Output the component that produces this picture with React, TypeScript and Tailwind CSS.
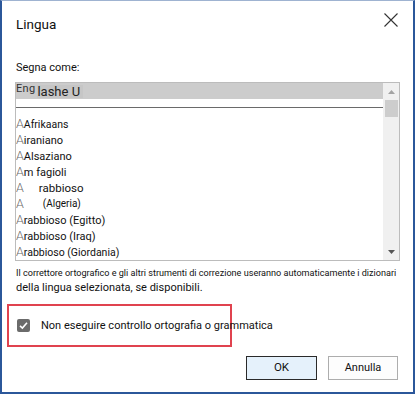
import React from "react";

const font = { fontFamily: 'Roboto, "Liberation Sans", sans-serif' };

function LightA() {
  return <span className="text-[12.5px] font-light text-[#6a6a6a]">A</span>;
}

export default function App() {
  return (
    <div
      className="w-[415px] h-[394px] bg-white border-t border-t-[#9fb3d1] border-l-2 border-r-2 border-b-2 border-[#2b579a] text-[#111] overflow-hidden"
      style={font}
    >
      {/* header */}
      <div className="flex justify-between items-start pl-[14px] pr-[15px] pt-[12px] h-[33px]">
        <div className="text-[13.5px] leading-[20px] mt-[1px]">Lingua</div>
        <svg width="14" height="14" viewBox="0 0 14 14" className="mt-[0px]">
          <path d="M0.5 0.5 L13.5 13.5 M13.5 0.5 L0.5 13.5" stroke="#333" strokeWidth="1.1" fill="none" />
        </svg>
      </div>

      <div className="pl-[14px] mt-[26px] text-[11px] leading-[16px] h-[16px]">Segna come:</div>

      {/* list box */}
      <div className="ml-[13px] mt-[6px] w-[385px] h-[179px] border border-[#bcbcbc] flex overflow-hidden">
        <div className="w-[367px] flex flex-col overflow-hidden">
          <div className="h-[17px] bg-[#cccccc] flex items-end leading-none">
            <span className="text-[11px] text-[#333] mb-[5px] tracking-[0.3px]">Eng</span>
            <span className="text-[13px] text-[#222] ml-[2px] mb-[1px] bg-[#c6c6c6] pr-[3px]">lashe U</span>
          </div>
          <div className="h-px bg-[#6a6a6a] mt-[8px]" />
          <div className="mt-[8px] flex flex-col text-[11px]">
            <div className="h-[16px] leading-[16px] whitespace-pre"><LightA /><span className="text-[10.5px]">Afrikaans</span></div>
            <div className="h-[16px] leading-[16px] whitespace-pre"><LightA />iraniano</div>
            <div className="h-[16px] leading-[16px] whitespace-pre"><LightA />Alsaziano</div>
            <div className="h-[16px] leading-[16px] whitespace-pre"><LightA />m fagioli</div>
            <div className="h-[16px] leading-[16px] whitespace-pre flex"><LightA /><span className="ml-[15px] text-[11.5px]">rabbioso</span></div>
            <div className="h-[16px] leading-[16px] whitespace-pre flex"><LightA /><span className="ml-[19px] text-[10px]">(Algeria)</span></div>
            <div className="h-[16px] leading-[16px] whitespace-pre"><LightA />rabbioso (Egitto)</div>
            <div className="h-[16px] leading-[16px] whitespace-pre"><LightA />rabbioso (Iraq)</div>
            <div className="h-[16px] leading-[16px] whitespace-pre"><LightA /><span className="text-[10.5px]">rabbioso (Giordania)</span></div>
          </div>
        </div>
        <div className="w-[16px] bg-[#f0f0f0] flex flex-col items-center">
          <div className="h-[17px] flex items-center justify-center">
            <svg width="7" height="4" viewBox="0 0 7 4"><path d="M0 4 L3.5 0 L7 4 Z" fill="#a3a3a3" /></svg>
          </div>
          <div className="w-[13px] h-[17px] bg-[#cdcdcd]" />
          <div className="flex-1" />
          <div className="h-[17px] flex items-center justify-center">
            <svg width="7" height="4" viewBox="0 0 7 4"><path d="M0 0 L7 0 L3.5 4 Z" fill="#555" /></svg>
          </div>
        </div>
      </div>

      {/* info text */}
      <div className="pl-[14px] mt-[5px]">
        <div className="text-[9.1px] leading-[14px] h-[14px] whitespace-nowrap">
          Il correttore ortografico e gli altri strumenti di correzione useranno automaticamente i dizionari
        </div>
        <div className="text-[11px] leading-[16px] h-[16px]">della lingua selezionata, se disponibili.</div>
      </div>

      {/* red box */}
      <div className="ml-[5px] mt-[8px] w-[225px] h-[43px] border-2 border-[#e0434f] flex items-center pl-[8px]">
        <div className="w-[13px] h-[13px] shrink-0 bg-[#6b6b6b] rounded-[2px] flex items-center justify-center">
          <svg width="9" height="9" viewBox="0 0 9 9">
            <path d="M1 4.8 L3.4 7 L8 1.8" stroke="#fff" strokeWidth="1.6" fill="none" />
          </svg>
        </div>
        <span className="ml-[11px] text-[11px] leading-[16px] whitespace-nowrap">
          Non eseguire controllo ortografia o grammatica
        </span>
      </div>

      {/* buttons */}
      <div className="flex justify-end gap-[11px] pr-[15px] mt-[9px]">
        <div className="w-[71px] h-[24px] bg-[#e5f1fb] border border-[#2a2a2a] flex items-center justify-center text-[11.5px]">
          OK
        </div>
        <div className="w-[70px] h-[24px] bg-[#fdfdfd] border border-[#adadad] flex items-center justify-center text-[11px]">
          Annulla
        </div>
      </div>
    </div>
  );
}
